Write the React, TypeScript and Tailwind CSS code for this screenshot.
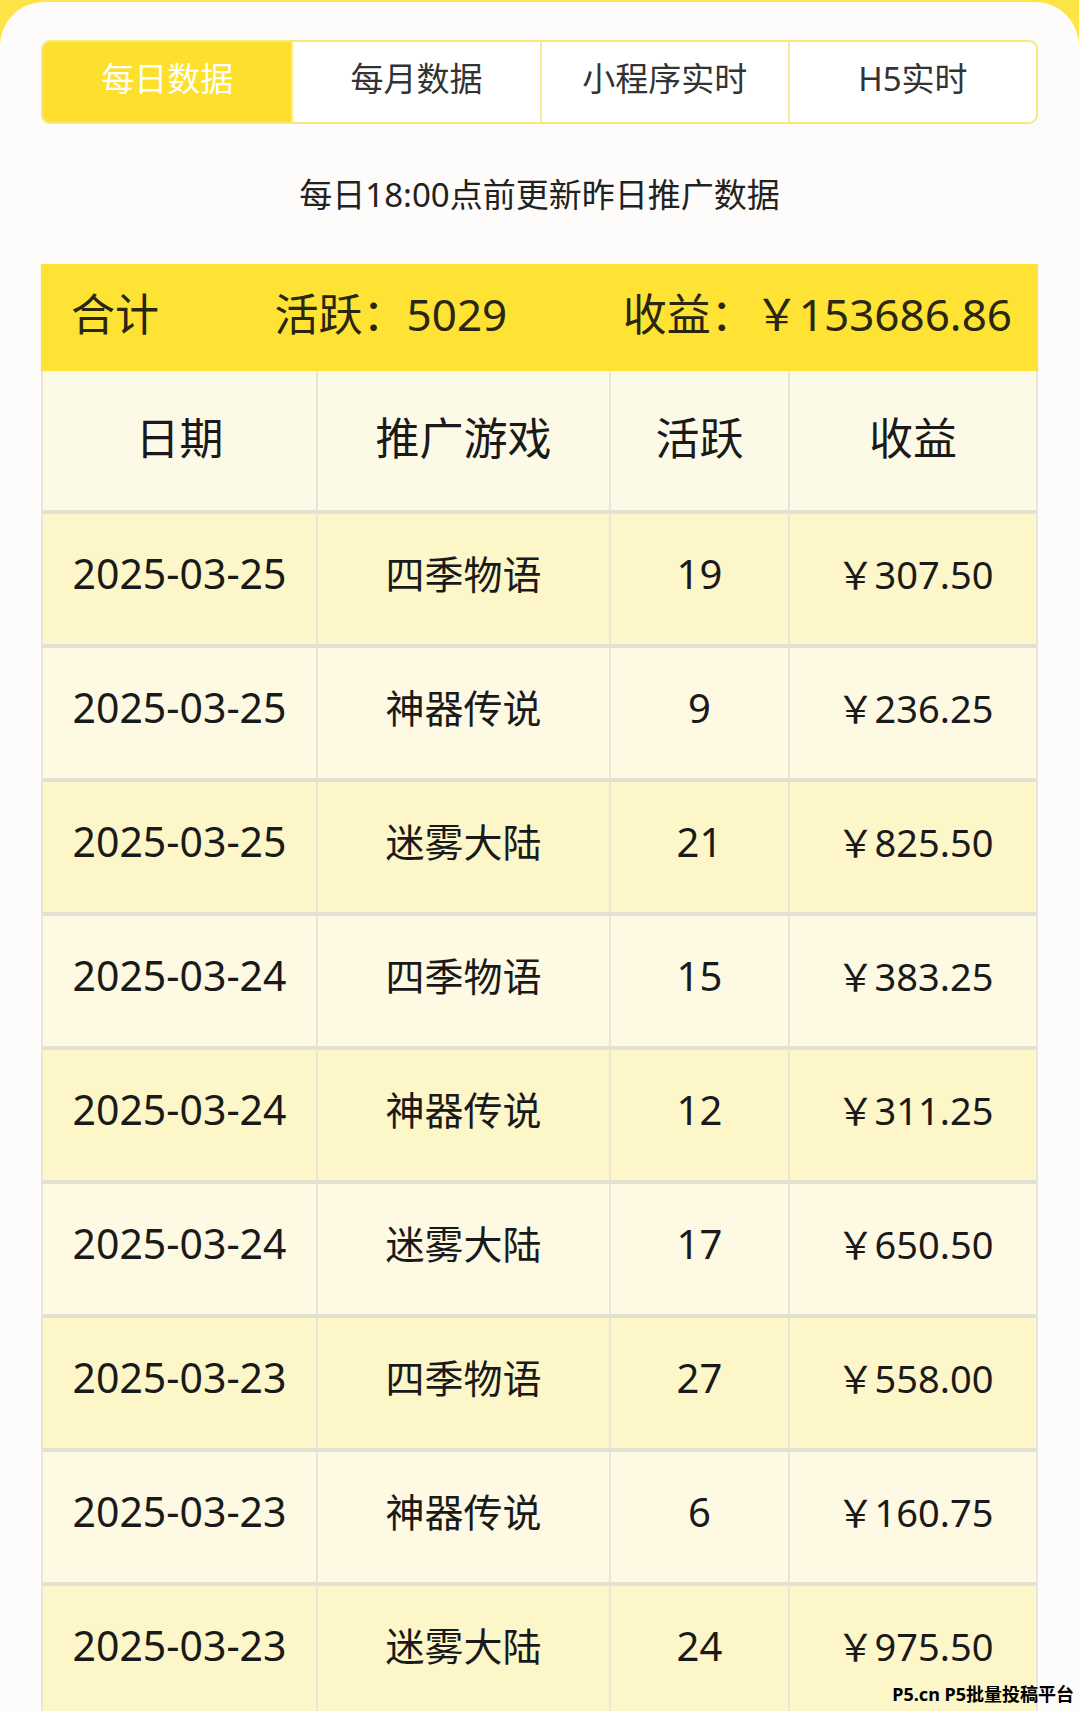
import React from 'react';

const tabs = ['每日数据', '每月数据', '小程序实时', 'H5实时'];

const rows = [
  { date: '2025-03-25', game: '四季物语', active: '19', income: '307.50' },
  { date: '2025-03-25', game: '神器传说', active: '9', income: '236.25' },
  { date: '2025-03-25', game: '迷雾大陆', active: '21', income: '825.50' },
  { date: '2025-03-24', game: '四季物语', active: '15', income: '383.25' },
  { date: '2025-03-24', game: '神器传说', active: '12', income: '311.25' },
  { date: '2025-03-24', game: '迷雾大陆', active: '17', income: '650.50' },
  { date: '2025-03-23', game: '四季物语', active: '27', income: '558.00' },
  { date: '2025-03-23', game: '神器传说', active: '6', income: '160.75' },
  { date: '2025-03-23', game: '迷雾大陆', active: '24', income: '975.50' },
];

const cols = 'grid grid-cols-[273px_293px_179px_1fr]';
const cell = 'flex items-center justify-center';

export default function App() {
  return (
    <div
      className="relative h-[1711px] w-[1079px] overflow-hidden bg-[#fde547] pt-[2px]"
      style={{ fontFamily: '"Noto Sans", "Noto Sans CJK SC", sans-serif' }}
    >
      <div className="h-full rounded-t-[44px] bg-[#fefcfb] px-[41px] pt-[38px] text-[#1f1f1f]">
        {/* Tabs */}
        <div className="grid h-[84px] grid-cols-4 overflow-hidden rounded-[9px] border-2 border-[#f7e77c] bg-white">
          {tabs.map((t, i) => (
            <div
              key={t}
              className={`${cell} pb-[6px] text-[33px] ${
                i === 0
                  ? 'bg-[#fde02e] text-white'
                  : 'border-l-2 border-[#f6ec9c] text-[#333]'
              }`}
            >
              {t}
            </div>
          ))}
        </div>

        {/* Subtitle */}
        <div className="flex h-[140px] items-center justify-center pt-[2px] text-[33px] text-[#222]">
          每日18:00点前更新昨日推广数据
        </div>

        {/* Summary */}
        <div className="flex h-[107px] items-center justify-between bg-[#fee234] pb-[8px] pl-[30px] pr-[26px] text-[44px] text-[#2a2611] shadow-[0_2px_3px_rgba(0,0,0,0.08)]">
          <span>合计</span>
          <span>活跃：5029</span>
          <span>收益：￥153686.86</span>
        </div>

        {/* Table */}
        <div className="border-x-2 border-[#e7e4d8]">
          <div className={`${cols} h-[139px] bg-[#fdf9e7] text-[44px] text-[#1a1a1a]`}>
            <div className={`${cell} pb-[6px]`}>日期</div>
            <div className={`${cell} border-l-2 border-[#e9e5d7] pb-[6px]`}>推广游戏</div>
            <div className={`${cell} border-l-2 border-[#e9e5d7] pb-[6px]`}>活跃</div>
            <div className={`${cell} border-l-2 border-[#e9e5d7] pb-[6px]`}>收益</div>
          </div>
          {rows.map((r, i) => (
            <div
              key={i}
              className={`${cols} h-[134px] border-t-4 border-[#e3e0d4] text-[#1a1a1a] ${
                i % 2 === 0 ? 'bg-[#fdf6c8]' : 'bg-[#fef9e3]'
              }`}
            >
              <div className={`${cell} pb-[10px] text-[41px]`}>{r.date}</div>
              <div className={`${cell} border-l-2 border-[#e9e5d7] pb-[10px] text-[39px]`}>{r.game}</div>
              <div className={`${cell} border-l-2 border-[#e9e5d7] pb-[10px] text-[40px]`}>{r.active}</div>
              <div className={`${cell} border-l-2 border-[#e9e5d7] pb-[10px] pl-[4px] text-[38px]`}>￥{r.income}</div>
            </div>
          ))}
        </div>
      </div>

      {/* Watermark */}
      <div className="absolute bottom-[8px] right-[5px] text-[18px] font-bold leading-none text-black">
        P5.cn P5批量投稿平台
      </div>
    </div>
  );
}
